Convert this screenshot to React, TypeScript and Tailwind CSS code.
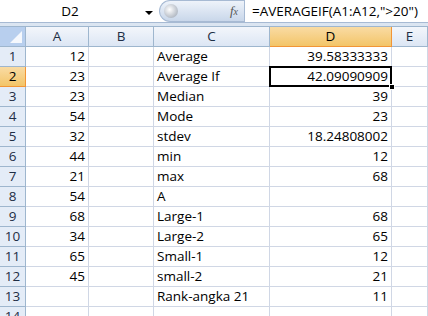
import React from 'react'

const rows: [string, string, string, string][] = [
  ['12', '', 'Average', '39.58333333'],
  ['23', '', 'Average If', '42.09090909'],
  ['23', '', 'Median', '39'],
  ['54', '', 'Mode', '23'],
  ['32', '', 'stdev', '18.24808002'],
  ['44', '', 'min', '12'],
  ['21', '', 'max', '68'],
  ['54', '', 'A', ''],
  ['68', '', 'Large-1', '68'],
  ['34', '', 'Large-2', '65'],
  ['65', '', 'Small-1', '12'],
  ['45', '', 'small-2', '21'],
  ['', '', 'Rank-angka 21', '11'],
  ['', '', '', ''],
]

const cols = 'grid grid-cols-[26px_63px_65px_116px_122px_1fr]'
const cell = 'h-5 border-r border-b border-[#d0d7e5] px-[3px] leading-[19px] whitespace-nowrap overflow-visible'

function ColHead({ label, active }: { label: string; active?: boolean }) {
  return active ? (
    <div className="h-5 border-r border-b border-[#f29536] bg-gradient-to-b from-[#f9dba3] to-[#f3c567] text-center leading-[19px]">{label}</div>
  ) : (
    <div className="h-5 border-r border-b border-[#9eb6ce] bg-gradient-to-b from-[#f3f6fb] to-[#dce6f4] text-center leading-[19px] text-[#1e2e45]">{label}</div>
  )
}

export default function App() {
  return (
    <div className="w-[428px] h-[316px] overflow-hidden bg-white text-[13.5px] text-black" style={{ fontFamily: '"Open Sans", sans-serif' }}>
      {/* formula bar */}
      <div className="flex h-[23px] bg-white border-b border-[#a7bad3]">
        <div className="relative w-[159px] flex items-center">
          <span className="w-[140px] text-center">D2</span>
          <svg width="8" height="5" viewBox="0 0 8 5" className="absolute left-[145px] top-[11px]"><path d="M0 0h8L4 4z" fill="#000" /></svg>
        </div>
        <div className="relative flex items-center w-[85px] rounded-l-full bg-gradient-to-b from-[#eef3fa] to-[#c9d7ea] border border-[#a7bad3] border-r-0">
          <span className="ml-[4px] w-[14px] h-[14px] rounded-full bg-[radial-gradient(circle_at_40%_40%,#ffffff,#b5bcc6_70%)]" />
          <span className="ml-auto mr-[6px] italic text-[13px] text-[#555]" style={{ fontFamily: '"Liberation Serif", serif' }}>f<span className="text-[10px]">x</span></span>
        </div>
        <div className="flex-1 flex items-center pl-[7px] border-l border-[#a7bad3] text-[13.5px]">=AVERAGEIF(A1:A12,"&gt;20")</div>
      </div>
      <div className="h-[4px] bg-[#dbe5f1] border-b border-[#9eb6ce]" />
      {/* header row */}
      <div className={cols}>
        <div className="relative h-5 border-r border-b border-[#9eb6ce] bg-[#b8cfee]">
          <svg width="12" height="12" viewBox="0 0 12 12" className="absolute right-[3px] bottom-[3px]"><path d="M12 0V12H0z" fill="#ffffff" opacity="0.85" /></svg>
        </div>
        <ColHead label="A" />
        <ColHead label="B" />
        <ColHead label="C" />
        <ColHead label="D" active />
        <ColHead label="E" />
      </div>
      {rows.map((r, i) => (
        <div key={i} className={cols}>
          <div className={i === 1
            ? 'h-5 border-r border-b border-[#f29536] bg-gradient-to-b from-[#f9dba3] to-[#f3c567] text-center leading-[19px]'
            : 'h-5 border-r border-b border-[#9eb6ce] bg-[#e4ecf7] text-center leading-[19px] text-[#1e2e45]'}>{i + 1}</div>
          <div className={cell + ' text-right'}>{r[0]}</div>
          <div className={cell}>{r[1]}</div>
          <div className={cell}>{r[2]}</div>
          {i === 1 ? (
            <div className="relative h-5 border-r border-b border-[#d0d7e5]">
              <div className="absolute -left-[1px] -top-[1px] w-[123px] h-[21px] border-2 border-black px-[2px] text-right leading-[17px]">{r[3]}</div>
              <div className="absolute -right-[4px] -bottom-[4px] w-[6px] h-[6px] bg-black border border-white" />
            </div>
          ) : (
            <div className={cell + ' text-right'}>{r[3]}</div>
          )}
          <div className={cell}></div>
        </div>
      ))}
    </div>
  )
}
